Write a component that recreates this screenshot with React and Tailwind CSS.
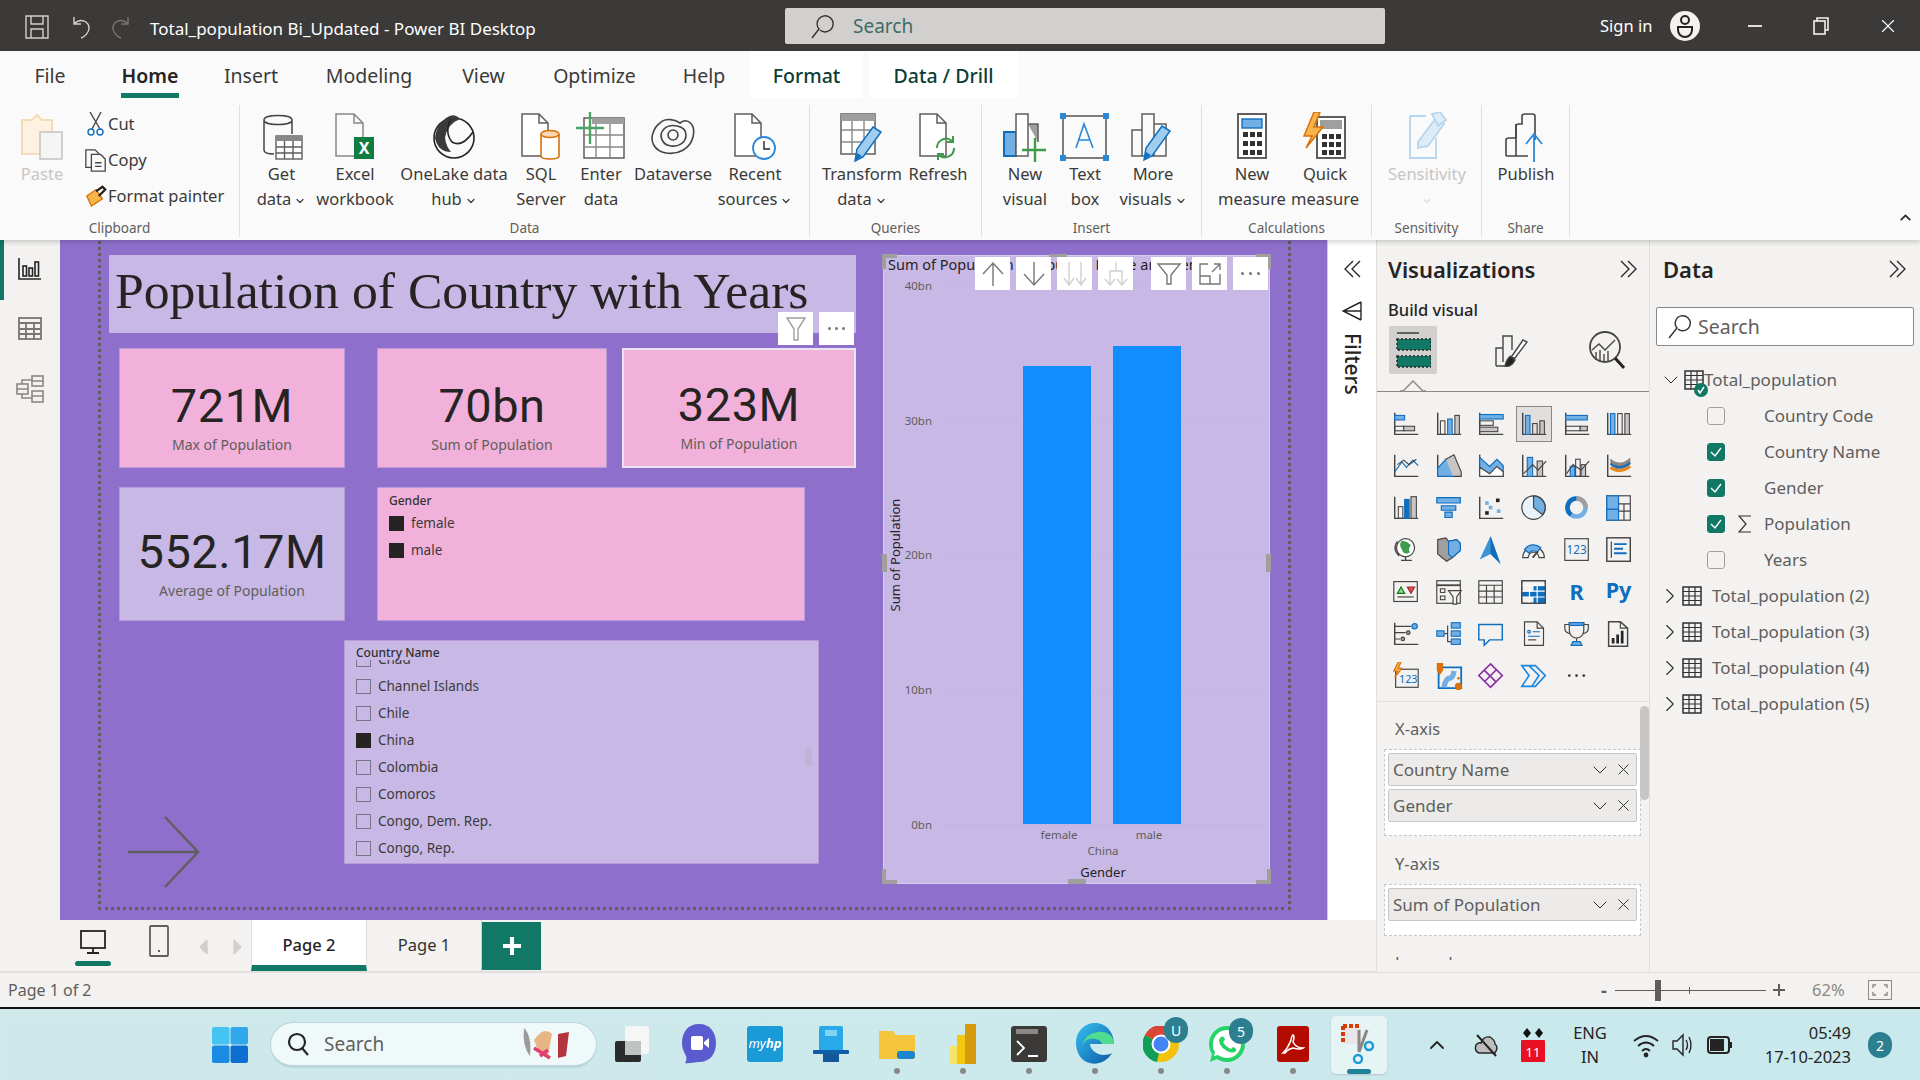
import { ChevronDown, ChevronRight, ChevronUp, X } from 'lucide-react';

const FONT = { fontFamily: '"Noto Sans", "Open Sans", sans-serif' };
const D = '#464544';
const BL = '#106ebe';
const LB = '#71afe5';
const GR = '#c8c6c4';
const TEAL = '#117865';

// line drawing wrapper, page of viewBox units
function Ic({ w = 30, h = 30, vb, sw = 1.4, s = D, children, className = '' }) {
  return (
    <svg width={w} height={h} viewBox={vb || `0 0 ${w} ${h}`} fill="none" stroke={s} strokeWidth={sw} className={className}>
      {children}
    </svg>
  );
}

const Axes = () => <path d="M3 3V27H29" stroke={D} strokeWidth="1.6" />;

const R = ({ x, y, w, h, f = 'none', s = D }) => <rect x={x} y={y} width={w} height={h} fill={f} stroke={s} strokeWidth="1.2" />;

const DoubleChev = ({ left }) => (
  <Ic w={20} h={20} s="#252423" sw={1.3}>
    <path d={left ? 'M18 2 10 10 18 18M11 2 3 10 11 18' : 'M2 2 10 10 2 18M9 2 17 10 9 18'} />
  </Ic>
);

const VIZ = [
  <><Axes /><R x={3} y={6} w={11} h={5} f={LB} s={BL} /><R x={3} y={12} w={8} h={0} /><R x={3} y={18} w={10} h={5} /><R x={13} y={18} w={12} h={5} f={GR} /></>,
  <><Axes /><R x={6} y={12} w={5} h={15} /><R x={14} y={10} w={5} h={17} f={LB} s={BL} /><R x={22} y={6} w={5} h={21} f={GR} /></>,
  <><Axes /><R x={3} y={5} w={26} h={5} f={LB} s={BL} /><R x={3} y={12} w={15} h={5} /><R x={3} y={19} w={20} h={5} f={GR} /></>,
  <><Axes /><R x={6} y={6} w={5} h={21} f={LB} s={BL} /><R x={14} y={15} w={5} h={12} /><R x={22} y={12} w={5} h={15} f={GR} /></>,
  <><Axes /><R x={3} y={6} w={24} h={5} f={LB} s={BL} /><R x={3} y={18} w={16} h={5} /><R x={19} y={18} w={8} h={5} f={GR} /></>,
  <><Axes /><R x={6} y={4} w={5} h={23} f={LB} s={BL} /><R x={14} y={4} w={5} h={23} /><R x={22} y={4} w={5} h={23} f={GR} /></>,
  <><Axes /><path d="M3 22 11 11 16 17 23 9 29 15" stroke={BL} /><path d="M6 14 13 9 19 14 27 8" /></>,
  <><Axes /><path d="M3 27V18L12 8 20 20 21 27Z" fill={LB} stroke={BL} /><path d="M12 8 21 3 29 22V27H20" fill={GR} /></>,
  <><Axes /><path d="M3 6 14 16 22 8 29 15V27H3Z" fill={LB} stroke={BL} /><path d="M3 17 14 24 22 16 29 22V27H3Z" fill="#fff" /></>,
  <><Axes /><R x={8} y={6} w={6} h={21} f={LB} s={BL} /><R x={19} y={10} w={6} h={17} f={GR} /><path d="M4 24 14 14 20 20 29 10" /></>,
  <><Axes /><R x={8} y={16} w={5} h={11} f={LB} s={BL} /><R x={14} y={8} w={5} h={19} /><R x={20} y={14} w={5} h={13} f={GR} /><path d="M4 24 11 14 20 20 29 10" /></>,
  <><Axes /><path d="M6 7Q16 17 28 6V14Q16 25 6 14Z" fill="#8a8886" stroke="none" /><path d="M6 17Q16 25 28 16" stroke="#e88a1e" strokeWidth="3" /><path d="M6 13Q16 21 28 12" stroke={BL} strokeWidth="2" /></>,
  <><Axes /><R x={7} y={14} w={5} h={13} /><R x={14} y={6} w={5} h={21} f={BL} s={BL} /><R x={21} y={3} w={6} h={24} f={GR} /></>,
  <><path d="M2 4H28V10H2Z M7 13H23V18H7Z M11 20H19V26H11Z" fill={LB} stroke={BL} /></>,
  <><Axes /><rect x="21" y="5" width="4" height="4" fill="#252423" stroke="none" /><rect x="9" y="8" width="4" height="4" fill={LB} stroke="none" /><rect x="13" y="13" width="4" height="4" fill={LB} stroke="none" /><rect x="9" y="19" width="4" height="4" fill="#252423" stroke="none" /><rect x="22" y="17" width="4" height="4" fill={LB} stroke="none" /></>,
  <><circle cx="15" cy="15" r="13" fill="#eaf3fa" /><path d="M15 2A13 13 0 0 1 25 23L15 15Z" fill={LB} stroke={D} /></>,
  <><circle cx="15" cy="15" r="10" stroke={LB} strokeWidth="5" /><path d="M15 5A10 10 0 0 0 9 23" stroke={BL} strokeWidth="5" /><path d="M15 5A10 10 0 0 1 25 15" stroke="#a19f9d" strokeWidth="5" /></>,
  <><rect x="2" y="2" width="26" height="27" stroke={D} /><rect x="2" y="2" width="13" height="15" fill={LB} stroke={BL} /><rect x="2" y="17" width="13" height="12" fill={LB} stroke={BL} /><path d="M15 11H28M21 11V29M15 19H28" /></>,
  <><circle cx="15" cy="13" r="10" fill="#fff" /><path d="M11 5Q17 6 21 10 17 15 20 18 13 22 11 15 7 10 11 5Z" fill="#3c9c4a" stroke="none" /><path d="M6 6Q0 14 8 22M10 27H22M15 23V27" strokeWidth="1.6" /></>,
  <><path d="M3 4 12 2 15 6 24 4 28 8V16L19 24 13 28 8 24 3 20Z" fill="#a19f9d" stroke={D} /><path d="M15 6 24 4 28 8V16L19 24 15 20Z" fill={LB} stroke={BL} /></>,
  <><path d="M15 0 26 31 15 20 3 26Z" fill="#3d93d4" stroke="none" /><path d="M15 0 26 31 15 20Z" fill={BL} stroke="none" /></>,
  <><path d="M3 24A12 12 0 0 1 27 24H21A6 6 0 0 0 9 24Z" stroke={D} /><path d="M5 15A12 12 0 0 1 23 13L19 18A6 6 0 0 0 10 19Z" fill={LB} stroke={BL} /><path d="M14 24 20 17" strokeWidth="2" /></>,
  <><rect x="2" y="3" width="26" height="24" /><text x="15" y="20" fontFamily="Noto Sans" fontSize="13" fill={BL} stroke="none" textAnchor="middle">123</text></>,
  <><rect x="2" y="2" width="26" height="26" strokeWidth="1.6" /><path d="M7 6V24" /><path d="M10 9H24M10 14H20M10 19H24" stroke={BL} strokeWidth="2.2" /></>,
  <><rect x="2" y="4" width="26" height="22" /><path d="M6 17 10 10 14 17Z" fill="#92d4a5" stroke="#107c10" /><path d="M17 10H25L21 17Z" fill="#e05252" stroke="#a4262c" /><path d="M6 21H24" /></>,
  <><rect x="2" y="3" width="26" height="25" /><path d="M2 8H28" strokeWidth="2" /><R x={6} y={12} w={5} h={4} /><R x={6} y={20} w={5} h={4} /><path d="M15 14H29L24 21V29H20V21Z" fill="#f3f2f1" /></>,
  <><rect x="2" y="3" width="26" height="25" /><path d="M2 8H28M2 14.5H28M2 21H28M10.5 8V28M19 8V28" /></>,
  <><rect x="2" y="3" width="26" height="25" /><rect x="15" y="9" width="13" height="19" fill={BL} stroke="none" /><rect x="2" y="15" width="26" height="6" fill={BL} stroke="none" /><path d="M2 8H28M2 14.5H28M2 21H28M10.5 8V28M19 8V28" stroke="#fff" /><rect x="2" y="3" width="26" height="25" /></>,
  <text x="15" y="24" fontFamily="Noto Sans" fontWeight="700" fontSize="24" fill={BL} stroke="none" textAnchor="middle">R</text>,
  <text x="15" y="22" fontFamily="Noto Sans" fontWeight="700" fontSize="24" fill={BL} stroke="none" textAnchor="middle">Py</text>,
  <><Axes /><path d="M3 7H21M3 14H15M3 21H9" /><circle cx="25" cy="7" r="3" fill={LB} stroke={BL} /><circle cx="18" cy="14" r="2" fill="#a19f9d" /><circle cx="12" cy="21" r="2" fill="#a19f9d" /></>,
  <><path d="M9 15H14M14 6V24H18" stroke={D} /><R x={2} y={12} w={8} h={6} f={LB} s={BL} /><R x={18} y={3} w={10} h={6} f={LB} s={BL} /><R x={18} y={12} w={10} h={6} f={LB} s={BL} /><R x={18} y={21} w={10} h={6} f={LB} s={BL} /></>,
  <path d="M2 5H28V22H14L8 28V22H2Z" stroke={BL} strokeWidth="1.6" />,
  <><path d="M5 2H19L26 9V28H5Z" /><path d="M19 2V9H26" /><circle cx="10" cy="13" r="1.5" stroke={BL} /><path d="M14 13H22M9 18H22" stroke={BL} /><path d="M9 22H18" /></>,
  <><path d="M7 3H23V12A8 8 0 0 1 7 12Z M7 5H2V9Q2 14 8 15M23 5H28V9Q28 14 22 15M15 20V24" /><path d="M7 3H23V6H7Z" fill={LB} stroke={BL} /><path d="M9 28 11 24H19L21 28Z" fill={LB} stroke={BL} /></>,
  <><path d="M4 2H17L25 9V29H4Z" strokeWidth="1.6" /><path d="M17 2V9H25" /><path d="M9 26V20M14 26V16M19 26V12" stroke="#252423" strokeWidth="3" /></>,
  <><rect x="4" y="8" width="25" height="20" /><text x="18" y="23" fontFamily="Noto Sans" fontSize="12" fill={BL} stroke="none" textAnchor="middle">123</text><path d="M7 0 2 10H6L3 17 11 7H7L10 0Z" fill="#f7b44a" stroke="#d9700a" /></>,
  <><path d="M4 6H29V29H4Z" stroke={BL} strokeWidth="2" /><path d="M10 28Q12 18 16 18T21 10" stroke={LB} strokeWidth="6" /><path d="M2 1H9V9L5 15 2 9Z" fill="#d9700a" stroke="none" /><circle cx="26" cy="27" r="4" fill="#d9700a" stroke="none" /><circle cx="26" cy="18" r="1.5" fill="#d9700a" stroke="none" /></>,
  <path d="M15 2 28 15 15 28 2 15Z M8 9 21 22M22 8 9 21" stroke="#8a2da5" strokeWidth="1.8" />,
  <path d="M2 4H17L28 15 17 27H2L10 15ZM10 4 21 15 13 27" stroke="#1a86e0" strokeWidth="1.8" />,
  <g fill="#3b3a39" stroke="none"><circle cx="7" cy="15" r="1.5" /><circle cx="15" cy="15" r="1.5" /><circle cx="23" cy="15" r="1.5" /></g>,
];

const Caret = () => <ChevronDown size={12} strokeWidth={2.4} className="inline ml-[3px]" />;

function RBtn({ w, icon, l1, l2, caret, dim }) {
  return (
    <div className={`${w} flex flex-col items-center shrink-0 ${dim ? 'text-[#c8c6c4]' : 'text-[#3b3a39]'}`}>
      <div className="h-[50px] flex items-center justify-center">{icon}</div>
      <div className="h-[24px] leading-[24px] whitespace-nowrap">{l1}{caret && !l2 ? <Caret /> : null}</div>
      <div className="h-[25px] leading-[26px] whitespace-nowrap">{l2}{caret && l2 ? <Caret /> : null}</div>
    </div>
  );
}

function Group({ w, label, children, pad = '' }) {
  return (
    <div className={`${w} h-[132px] mt-[7px] flex flex-col border-r border-[#e1dfdd] shrink-0`}>
      <div className={`flex h-[114px] pt-[7px] ${pad}`}>{children}</div>
      <div className="h-[18px] text-center text-[13.5px] text-[#605e5c] leading-[18px]">{label}</div>
    </div>
  );
}

const Doc = () => <path d="M3 2H20L29 11V44H3Z M20 2V11H29" stroke="#605e5c" strokeWidth="1.5" fill="#fff" />;
const Pencil = ({ t = '' }) => (
  <g transform={t}>
    <path d="M0 34 2 22 18 0 26 5 8 30Z" fill="#9fcdf0" stroke={BL} strokeWidth="1.5" />
    <path d="M0 34 2 26 7 29Z" fill={BL} stroke="none" />
  </g>
);

const RIB = {
  paste: (
    <Ic w={46} h={50}>
      <path d="M3 8H13L18 3 23 8H33V42H3Z" fill="#fdf2e2" stroke="#f3d4a7" strokeWidth="1.6" />
      <rect x="21" y="20" width="22" height="27" fill="#f5f5f5" stroke="#c8c6c4" strokeWidth="1.6" />
    </Ic>
  ),
  cut: <Ic w={20} h={26}><path d="M4 1 14 18M15 1 6 18" /><circle cx="5" cy="21" r="3" stroke={BL} /><circle cx="14" cy="21" r="3" stroke={BL} /></Ic>,
  copy: <Ic w={26} h={28}><path d="M2 3H12L16 7V22H2Z" /><path d="M8 8H18L23 13V26H8Z" fill="#fafafa" /><path d="M12 17H19M12 21H19" /></Ic>,
  painter: <Ic w={26} h={26}><path d="M3 13 13 6 20 16 8 24Z" fill="#f7b44a" stroke="#d9700a" /><path d="M13 8 20 3 23 6 16 13" stroke="#252423" strokeWidth="2.5" /></Ic>,
  getdata: (
    <Ic w={44} h={50}>
      <path d="M4 8V38Q4 42 14 42M4 8C4 2 32 2 32 8 32 14 4 14 4 8ZM32 8V22" strokeWidth="1.5" />
      <rect x="16" y="24" width="26" height="23" fill="#fff" stroke="#605e5c" />
      <path d="M16 24H42V29H16Z" fill="#8a8886" stroke="none" />
      <path d="M16 35H42M16 41H42M24.5 29V47M33 29V47" stroke="#605e5c" />
    </Ic>
  ),
  excel: (
    <Ic w={42} h={50}>
      <path d="M2 2H20L29 11V44H2Z M20 2V11H29" stroke="#8a8886" strokeWidth="1.5" />
      <rect x="20" y="25" width="20" height="22" fill="#107c41" stroke="none" />
      <text x="30" y="42" fontFamily="Noto Sans" fontSize="16" fontWeight="700" fill="#fff" stroke="none" textAnchor="middle">X</text>
    </Ic>
  ),
  onelake: (
    <Ic w={44} h={46}>
      <circle cx="22" cy="24" r="20" stroke="#252423" strokeWidth="1.6" />
      <path d="M14 4Q22 -2 28 5 15 10 13 24 14 32 19 38 6 38 3 24 4 12 14 4Z" fill="#3b3a39" stroke="none" />
      <path d="M19 5Q12 18 20 28 30 34 41 18" stroke="#252423" strokeWidth="1.6" />
    </Ic>
  ),
  sql: (
    <Ic w={44} h={50}>
      <Doc />
      <g stroke="#d9700a" strokeWidth="1.6" fill="#fff">
        <path d="M22 22V44Q22 47 31 47T40 44V22" />
        <ellipse cx="31" cy="22" rx="9" ry="3.5" fill="#f8d7b5" />
      </g>
    </Ic>
  ),
  enter: (
    <Ic w={50} h={50}>
      <rect x="8" y="6" width="40" height="40" stroke="#605e5c" strokeWidth="1.5" fill="#fff" />
      <path d="M16 6H48V12H16Z" fill="#a19f9d" stroke="none" />
      <path d="M8 23H48M8 35H48M20 12V46M34 12V46" stroke="#8a8886" />
      <path d="M14 0V32M0 16H28" stroke="#4aa564" strokeWidth="2.4" />
    </Ic>
  ),
  dataverse: (
    <Ic w={46} h={44}>
      <path d="M10 8C16 2 26 5 30 8 38 2 46 10 43 22 40 34 28 40 16 38 4 36 0 26 3 18 5 12 7 10 10 8Z" strokeWidth="1.6" />
      <path d="M14 14C20 8 36 10 36 20 36 28 28 32 21 31 12 30 8 20 14 14Z" strokeWidth="1.6" />
      <circle cx="23" cy="20" r="5" strokeWidth="1.6" />
    </Ic>
  ),
  recent: (
    <Ic w={46} h={50}>
      <Doc />
      <circle cx="32" cy="36" r="11" fill="#fff" stroke="#2b88d8" strokeWidth="1.8" />
      <path d="M32 29V37H38" stroke="#252423" />
    </Ic>
  ),
  transform: (
    <Ic w={46} h={50}>
      <rect x="2" y="2" width="34" height="40" fill="#fff" stroke="#605e5c" strokeWidth="1.5" />
      <path d="M2 2H36V9H2Z" fill="#a19f9d" stroke="none" />
      <path d="M2 18H36M2 30H36M13 9V42M25 9V42" stroke="#8a8886" />
      <Pencil t="translate(16 15)" />
    </Ic>
  ),
  refresh: (
    <Ic w={42} h={50}>
      <Doc />
      <path d="M20 36A9 9 0 0 1 35 29M37 36A9 9 0 0 1 22 43" stroke="#3c9c4a" strokeWidth="2" />
      <path d="M36 24V30H30M21 48V42H27" stroke="#3c9c4a" strokeWidth="2" />
    </Ic>
  ),
  newvisual: (
    <Ic w={46} h={50}>
      <path d="M2 20H14V44H2Z" fill={LB} stroke={BL} strokeWidth="2" />
      <path d="M14 2H26V44H14Z" fill="#fff" stroke="#605e5c" strokeWidth="1.5" />
      <path d="M26 12H36V30" stroke="#605e5c" strokeWidth="1.5" fill="#a19f9d" />
      <path d="M33 26V50M20 38H44" stroke="#3c9c4a" strokeWidth="2.4" />
    </Ic>
  ),
  textbox: (
    <Ic w={50} h={50}>
      <rect x="3" y="4" width="43" height="42" stroke="#605e5c" strokeWidth="1.6" />
      <g fill="#2b88d8" stroke="none"><rect x="0" y="1" width="6" height="6" /><rect x="43" y="1" width="6" height="6" /><rect x="0" y="43" width="6" height="6" /><rect x="43" y="43" width="6" height="6" /></g>
      <path d="M16 36 24 12 33 36M19 28H30" stroke="#2b88d8" strokeWidth="1.6" />
    </Ic>
  ),
  more: (
    <Ic w={46} h={50}>
      <path d="M2 18H12V44H2Z M12 2H24V44H12Z M24 12H36V44H24Z" stroke="#605e5c" strokeWidth="1.5" />
      <Pencil t="translate(14 14)" />
    </Ic>
  ),
  calc: (
    <Ic w={32} h={50}>
      <rect x="2" y="2" width="28" height="44" fill="#fff" stroke="#605e5c" strokeWidth="2" />
      <rect x="6" y="7" width="20" height="9" fill={LB} stroke={BL} />
      <g fill="#323130" stroke="none">
        {[20, 29, 38].map((y) => [7, 14, 21].map((x) => <rect key={`${x}-${y}`} x={x} y={y} width="5" height="5" />))}
      </g>
    </Ic>
  ),
  quick: (
    <Ic w={44} h={50}>
      <rect x="14" y="5" width="28" height="41" fill="#fff" stroke="#605e5c" strokeWidth="2" />
      <rect x="17" y="8" width="22" height="9" fill="#a19f9d" stroke="none" />
      <g fill="#323130" stroke="none">
        {[22, 30, 38].map((y) => [19, 26, 33].map((x) => <rect key={`${x}-${y}`} x={x} y={y} width="5" height="5" />))}
      </g>
      <path d="M11 0 1 24H9L3 36 20 15H11L17 0Z" fill="#f7b44a" stroke="#d9700a" strokeWidth="1.5" />
    </Ic>
  ),
  sensitivity: (
    <Ic w={42} h={50} s="#b5d6ee" sw={1.8}>
      <path d="M4 4H20M4 4V46H30V26" />
      <path d="M12 30 30 6 38 12 22 34 12 36Z" fill="#deecf9" />
      <path d="M26 2 34 0 40 8 32 14Z" fill="#deecf9" />
    </Ic>
  ),
  publish: (
    <Ic w={44} h={50}>
      <path d="M12 44V14Q12 12 15 12H18V4Q18 2 21 2H28Q31 2 31 4V28" strokeWidth="1.6" />
      <path d="M2 44V28Q2 26 5 26H12M2 44H24M12 12V26" strokeWidth="1.6" />
      <path d="M30 50V24M22 32 30 22 38 32" stroke="#2b88d8" strokeWidth="1.8" />
    </Ic>
  ),
};

function TitleBar() {
  return (
    <div className="h-[51px] bg-[#3b3a39] flex items-center shrink-0 text-white">
      <div className="w-[150px] flex items-center pl-[25px] pt-[3px] shrink-0">
        <Ic w={24} h={24} s="#d2d0ce"><path d="M1 1H23V23H1ZM6 1V9H18V1M6 23V14H18V23" /></Ic>
        <Ic w={22} h={24} s="#d2d0ce" className="ml-[20px]"><path d="M5 2V9H12M5 9C12 2 20 7 20 13 20 17 16 22 12 23" /></Ic>
        <Ic w={22} h={24} s="#797775" className="ml-[20px]"><path d="M17 2V9H10M17 9C10 2 2 7 2 13 2 17 6 22 10 23" /></Ic>
      </div>
      <div className="w-[635px] text-[17px] pt-[6px] whitespace-nowrap shrink-0">Total_population Bi_Updated - Power BI Desktop</div>
      <div className="w-[600px] h-[36px] bg-[#d2d0ce] rounded-[2px] flex items-center pl-[25px] shrink-0">
        <Ic w={26} h={26} s="#323130"><path d="M10 17A8 8 0 1 0 9 16L2 25" /></Ic>
        <span className="ml-[17px] text-[19px] pt-[2px] text-[#3d6b66]">Search</span>
      </div>
      <div className="flex-1 flex items-center pl-[215px]">
        <span className="text-[16.5px] pt-[2px] w-[70px] whitespace-nowrap">Sign in</span>
        <div className="w-[30px] h-[30px] rounded-full bg-[#f3f2f1] flex items-center justify-center">
          <Ic w={20} h={24} s="#252423" sw={2}><circle cx="10" cy="6" r="4" /><path d="M3 13H17V16A7 7 0 0 1 3 16Z" /></Ic>
        </div>
        <div className="w-[14px] h-[2px] bg-[#e1dfdd] ml-[48px]" />
        <Ic w={16} h={18} s="#f3f2f1" sw={1.6} className="ml-[51px]"><rect x="1" y="4" width="11" height="13" /><path d="M4 4V1H15V13H12" /></Ic>
        <X size={22} strokeWidth={1.2} className="ml-[48px]" />
      </div>
    </div>
  );
}

function RibbonTab({ w, label, active, boxed }) {
  return (
    <div className={`${w} h-[47px] pt-[2px] relative flex items-center justify-center shrink-0 text-[19.5px] ${active ? 'font-semibold text-[#252423]' : boxed ? 'font-medium text-[#0b3d36]' : 'text-[#3b3a39]'} ${boxed ? 'bg-white' : ''}`}>
      {label}
      {active && <div className="absolute bottom-0 left-[21px] w-[58px] h-[5px] bg-[#117865]" />}
    </div>
  );
}

function Ribbon() {
  return (
    <div className="h-[189px] bg-[#fafafa] shrink-0 relative z-10 shadow-[0_2px_5px_rgba(0,0,0,0.18)] text-[16.5px]">
      <div className="flex h-[47px]">
        <RibbonTab w="w-[100px]" label="File" />
        <RibbonTab w="w-[100px]" label="Home" active />
        <RibbonTab w="w-[102px]" label="Insert" />
        <RibbonTab w="w-[134px]" label="Modeling" />
        <RibbonTab w="w-[95px]" label="View" />
        <RibbonTab w="w-[127px]" label="Optimize" />
        <RibbonTab w="w-[92px]" label="Help" />
        <RibbonTab w="w-[113px]" label="Format" boxed />
        <div className="w-[6px]" />
        <RibbonTab w="w-[149px]" label="Data / Drill" boxed />
      </div>
      <div className="flex h-[142px] items-start">
        <Group w="w-[240px]" label="Clipboard">
          <RBtn w="w-[84px]" icon={RIB.paste} l1="Paste" dim />
          <div className="flex flex-col text-[#3b3a39] -mt-[6px]">
            {[['Cut', RIB.cut], ['Copy', RIB.copy], ['Format painter', RIB.painter]].map(([t, ic]) => (
              <div key={t} className="h-[36px] flex items-center whitespace-nowrap">
                <div className="w-[24px] flex justify-center">{ic}</div>
                <span>{t}</span>
              </div>
            ))}
          </div>
        </Group>
        <Group w="w-[570px]" label="Data" pad="pl-[4px]">
          <RBtn w="w-[75px]" icon={RIB.getdata} l1="Get" l2="data" caret />
          <RBtn w="w-[72px]" icon={RIB.excel} l1="Excel" l2="workbook" />
          <RBtn w="w-[126px]" icon={RIB.onelake} l1="OneLake data" l2="hub" caret />
          <RBtn w="w-[48px]" icon={RIB.sql} l1="SQL" l2="Server" />
          <RBtn w="w-[72px]" icon={RIB.enter} l1="Enter" l2="data" />
          <RBtn w="w-[72px]" icon={RIB.dataverse} l1="Dataverse" />
          <RBtn w="w-[92px]" icon={RIB.recent} l1="Recent" l2="sources" caret />
        </Group>
        <Group w="w-[172px]" label="Queries" pad="pl-[10px]">
          <RBtn w="w-[84px]" icon={RIB.transform} l1="Transform" l2="data" caret />
          <RBtn w="w-[68px]" icon={RIB.refresh} l1="Refresh" />
        </Group>
        <Group w="w-[220px]" label="Insert" pad="pl-[12px]">
          <RBtn w="w-[62px]" icon={RIB.newvisual} l1="New" l2="visual" />
          <RBtn w="w-[58px]" icon={RIB.textbox} l1="Text" l2="box" />
          <RBtn w="w-[78px]" icon={RIB.more} l1="More" l2="visuals" caret />
        </Group>
        <Group w="w-[170px]" label="Calculations" pad="pl-[10px]">
          <RBtn w="w-[80px]" icon={RIB.calc} l1="New" l2="measure" />
          <RBtn w="w-[66px]" icon={RIB.quick} l1="Quick" l2="measure" />
        </Group>
        <Group w="w-[110px]" label="Sensitivity">
          <RBtn w="w-[110px]" icon={RIB.sensitivity} l1="Sensitivity" l2={<ChevronDown size={12} className="inline" />} dim />
        </Group>
        <Group w="w-[88px]" label="Share">
          <RBtn w="w-[88px]" icon={RIB.publish} l1="Publish" />
        </Group>
        <div className="flex-1 flex justify-end pr-[6px] pt-[111px]"><ChevronUp size={17} strokeWidth={2.6} className="text-[#323130]" /></div>
      </div>
    </div>
  );
}

function Rail() {
  return (
    <div className="w-[60px] bg-[#f3f2f1] shrink-0 relative flex flex-col items-center pt-[17px] gap-[33px]">
      <div className="absolute left-0 top-0 w-[4px] h-[60px] bg-[#117865]" />
      <Ic w={24} h={24} s="#252423" sw={1.6}><path d="M1 1V22H23" /><rect x="5" y="9" width="3.5" height="10" /><rect x="11" y="11" width="3.5" height="8" /><rect x="17" y="5" width="3.5" height="14" /></Ic>
      <Ic w={26} h={24} s="#797775" sw={1.8} className="mt-[3px]"><rect x="2" y="1" width="22" height="21" /><path d="M2 6H24M2 12H24M2 17H24M9 6V22M17 6V22" /></Ic>
      <Ic w={30} h={30} s="#8a8886" sw={1.6}><rect x="2" y="10" width="11" height="10" /><rect x="17" y="2" width="11" height="10" /><rect x="17" y="17" width="11" height="11" /><path d="M2 15H13M17 7H28M17 22H28M7 10V6H17M7 20V24H17" /></Ic>
    </div>
  );
}

function Card({ w, value, label, pb = 'pb-[12px]', tone = 'bg-[#f2b1da]', extra = 'border border-[#b99ad8]' }) {
  return (
    <div className={`${w} h-full ${tone} ${extra} flex flex-col items-center shrink-0`}>
      <div className={`flex-1 flex flex-col items-center justify-end ${pb}`}>
        <div className="text-[47px] leading-[52px] text-[#252423] tracking-[0.5px] whitespace-nowrap" style={{ fontFamily: 'Roboto, sans-serif' }}>{value}</div>
        <div className="text-[14px] leading-[20px] text-[#605e5c] mt-[3px] whitespace-nowrap">{label}</div>
      </div>
    </div>
  );
}

function SlicerRow({ label, on, h = 'h-[27px]' }) {
  return (
    <div className={`${h} flex items-center shrink-0`}>
      <span className={`w-[15px] h-[15px] border ${on ? 'bg-[#252423] border-[#252423]' : 'border-[#7a7488]'}`} />
      <span className="ml-[7px] text-[13.5px] text-[#3b3a39] whitespace-nowrap">{label}</span>
    </div>
  );
}

const TICKS = [['40bn', 286], ['30bn', 421], ['20bn', 555], ['10bn', 690], ['0bn', 825]];

const Handle = ({ className }) => <div className={`absolute bg-[#a19f9d] ${className}`} />;

function ToolBtn({ children, className = '' }) {
  return <div className={`w-[35px] h-[33px] bg-white flex items-center justify-center shrink-0 ${className}`}>{children}</div>;
}

function Chart() {
  return (
    <div className="w-[387px] h-[629px] ml-[27px] bg-[#c8b8e6] border border-[#d6cdea] relative shrink-0">
      <svg width="387" height="629" viewBox="883 255 387 629" className="absolute -left-px -top-px">
        <text x="888" y="270" fontSize="14.5" fill="#252423" fontFamily="Noto Sans">Sum of Population by Country Name and Gender</text>
        {TICKS.map(([t, y]) => (
          <g key={t}>
            <text x="932" y={y + 4} textAnchor="end" fontSize="11.5" fill="#605e5c" fontFamily="Noto Sans">{t}</text>
            <path d={`M940 ${y}H1265`} stroke="#bcaedc" strokeDasharray="2 2" />
          </g>
        ))}
        <rect x="1023" y="366" width="68" height="458" fill="#118dff" />
        <rect x="1113" y="346" width="68" height="478" fill="#118dff" />
        <text transform="translate(900 555) rotate(-90)" textAnchor="middle" fontSize="13" fill="#252423" fontFamily="Noto Sans">Sum of Population</text>
        <text x="1059" y="839" textAnchor="middle" fontSize="11.5" fill="#605e5c" fontFamily="Noto Sans">female</text>
        <text x="1149" y="839" textAnchor="middle" fontSize="11.5" fill="#605e5c" fontFamily="Noto Sans">male</text>
        <text x="1103" y="855" textAnchor="middle" fontSize="11.5" fill="#605e5c" fontFamily="Noto Sans">China</text>
        <text x="1103" y="877" textAnchor="middle" fontSize="13" fill="#252423" fontFamily="Noto Sans">Gender</text>
      </svg>
      <div className="absolute left-[91px] top-[1px] flex gap-[6px]">
        <ToolBtn><Ic w={24} h={26} s="#797775"><path d="M12 25V2M2 13 12 2 22 13" /></Ic></ToolBtn>
        <ToolBtn><Ic w={24} h={26} s="#797775"><path d="M12 1V24M2 13 12 24 22 13" /></Ic></ToolBtn>
        <ToolBtn><Ic w={24} h={26} s="#d2d0ce"><path d="M6 1V24M1 17 6 24 11 17M18 1V24M13 17 18 24 23 17" /></Ic></ToolBtn>
        <ToolBtn><Ic w={24} h={26} s="#d2d0ce"><path d="M12 1V10M6 24V10H18V24M1 18 6 24 11 18M13 18 18 24 23 18" /></Ic></ToolBtn>
        <ToolBtn className="ml-[12px]"><Ic w={26} h={24} s="#797775"><path d="M2 2H24L15 13V22H11V13Z" /></Ic></ToolBtn>
        <ToolBtn><Ic w={24} h={24} s="#797775"><path d="M10 2H2V22H22V12M2 14H12V22M14 10 22 2M16 2H22V8" /></Ic></ToolBtn>
        <ToolBtn><span className="flex gap-[5px]">{[0, 1, 2].map((i) => <span key={i} className="w-[3px] h-[3px] rounded-full bg-[#797775]" />)}</span></ToolBtn>
      </div>
      <Handle className="-left-[2px] -top-[2px] w-[15px] h-[4px]" />
      <Handle className="-left-[2px] -top-[2px] w-[4px] h-[15px]" />
      <Handle className="left-[165px] -top-[2px] w-[18px] h-[3px]" />
      <Handle className="-right-[2px] -top-[2px] w-[15px] h-[3px]" />
      <Handle className="-right-[2px] -top-[2px] w-[3px] h-[15px]" />
      <Handle className="-left-[2px] top-[298px] w-[5px] h-[18px]" />
      <Handle className="-right-[2px] top-[298px] w-[5px] h-[18px]" />
      <Handle className="-left-[2px] -bottom-[1px] w-[15px] h-[4px]" />
      <Handle className="-left-[2px] -bottom-[1px] w-[4px] h-[15px]" />
      <Handle className="left-[184px] -bottom-[1px] w-[18px] h-[5px]" />
      <Handle className="-right-[2px] -bottom-[1px] w-[15px] h-[4px]" />
      <Handle className="-right-[2px] -bottom-[1px] w-[4px] h-[15px]" />
    </div>
  );
}

function Canvas() {
  return (
    <div className="w-[1267px] bg-[#8e70cc] shrink-0 relative flex pl-[49px] pt-[15px] overflow-hidden">
      <div className="absolute left-[38px] -top-[10px] w-[1193px] h-[680px] border-[3px] border-dotted border-[#605e5c] pointer-events-none" />
      <div className="w-[747px] shrink-0 relative">
        <div className="h-[78px] bg-[#c8b8e6] pl-[6px] pb-[6px] flex items-center">
          <span className="text-[51.7px] leading-[60px] text-[#252423] whitespace-nowrap" style={{ fontFamily: '"Liberation Serif", serif' }}>Population of Country with Years</span>
        </div>
        <div className="absolute right-[2px] top-[57px] flex gap-[6px]">
          <ToolBtn><Ic w={22} h={26} s="#a19f9d"><path d="M2 2H20L13 13V24H9V13Z" /></Ic></ToolBtn>
          <ToolBtn><span className="flex gap-[4px]">{[0, 1, 2].map((i) => <span key={i} className="w-[3px] h-[3px] rounded-full bg-[#797775]" />)}</span></ToolBtn>
        </div>
        <div className="flex h-[120px] mt-[15px] ml-[10px]">
          <Card w="w-[226px]" value="721M" label="Max of Population" />
          <div className="w-[32px]" />
          <Card w="w-[230px]" value="70bn" label="Sum of Population" />
          <div className="w-[15px]" />
          <Card w="w-[234px]" value="323M" label="Min of Population" extra="border-[2px] border-[#e8e4f2]" />
        </div>
        <div className="flex h-[134px] mt-[19px] ml-[10px]">
          <Card w="w-[226px]" value="552.17M" label="Average of Population" tone="bg-[#c8b8e6]" pb="pb-[19px]" />
          <div className="w-[32px]" />
          <div className="w-[428px] bg-[#f2b1da] border border-[#b99ad8] pl-[11px] pt-[4px]">
            <div className="text-[12px] leading-[17px] font-medium text-[#323130]">Gender</div>
            <SlicerRow label="female" on h="h-[27px] mt-[1px]" />
            <SlicerRow label="male" on />
          </div>
        </div>
        <div className="flex h-[224px] mt-[19px] ml-[19px]">
          <div className="w-[216px] shrink-0 pt-[176px]">
            <Ic w={72} h={72} s="#605e5c" sw={2.4}><path d="M0 36H70M37 1 70 36 37 71" /></Ic>
          </div>
          <div className="w-[475px] bg-[#c8b8e6] border border-[#b99ad8] pl-[11px] relative shrink-0">
            <div className="h-[19px] text-[12px] leading-[24px] font-medium text-[#323130] relative z-10">Country Name</div>
            <div className="h-[204px] overflow-hidden">
              <div className="-mt-[14px]">
                {['Chad', 'Channel Islands', 'Chile', 'China', 'Colombia', 'Comoros', 'Congo, Dem. Rep.', 'Congo, Rep.'].map((c) => (
                  <SlicerRow key={c} label={c} on={c === 'China'} />
                ))}
              </div>
            </div>
            <div className="absolute right-[6px] top-[106px] w-[7px] h-[19px] bg-[#bdb5d6]" />
          </div>
        </div>
      </div>
      <Chart />
    </div>
  );
}

function FiltersPane() {
  return (
    <div className="w-[49px] bg-white shrink-0 flex flex-col items-center pt-[19px] border-l border-[#d2d0ce]">
      <DoubleChev left />
      <Ic w={20} h={20} s="#252423" className="mt-[22px]"><path d="M1 10H19M19 1V19M19 1 1 10 19 19" /></Ic>
      <div className="mt-[12px] text-[21px] font-medium text-[#252423] [writing-mode:vertical-rl]">Filters</div>
    </div>
  );
}

function Well({ label, items, h, mt }) {
  return (
    <div className={mt}>
      <div className="pl-[18px] h-[24px] text-[16.5px] leading-[24px] text-[#605e5c]">{label}</div>
      <div className={`${h} mt-[8px] ml-[7px] w-[257px] bg-white border border-dashed border-[#c8c6c4] px-[3px] pt-[3px] flex flex-col gap-[3px]`}>
        {items.map((t) => (
          <div key={t} className="h-[33px] bg-[#edebe9] border border-[#c8c6c4] rounded-[2px] flex items-center pl-[4px] text-[17px] text-[#605e5c] shrink-0">
            <span className="flex-1 whitespace-nowrap">{t}</span>
            <ChevronDown size={24} strokeWidth={1} className="text-[#323130]" />
            <X size={19} strokeWidth={1.2} className="ml-[2px] mr-[3px] text-[#323130]" />
          </div>
        ))}
      </div>
    </div>
  );
}

function VizPane() {
  return (
    <div className="w-[274px] bg-[#f3f2f1] shrink-0 border-l border-[#e1dfdd] border-r relative overflow-hidden">
      <div className="h-[58px] flex items-center pl-[11px] pr-[10px] text-[22px] font-semibold text-[#252423]">
        <span className="flex-1">Visualizations</span>
        <DoubleChev />
      </div>
      <div className="pl-[11px] h-[28px] text-[16.5px] font-medium text-[#252423] leading-[24px]">Build visual</div>
      <div className="flex items-center pl-[12px] h-[48px]">
        <div className="w-[48px] h-[48px] bg-[#d2d0ce] rounded-[2px] flex items-center justify-center">
          <Ic w={36} h={38}>
            <path d="M2 2H24" stroke="#323130" />
            <rect x="2" y="8" width="34" height="11" fill={TEAL} stroke="#252423" strokeDasharray="2 2" />
            <rect x="2" y="25" width="34" height="11" fill={TEAL} stroke="#252423" strokeDasharray="2 2" />
          </Ic>
        </div>
        <Ic w={36} h={40} className="ml-[56px]">
          <path d="M3 36V18H10V6H19V20M10 18V32M3 36H12" />
          <path d="M14 34Q16 26 22 28L34 12 30 10 19 26" fill="#fff" />
          <path d="M12 36Q18 38 22 30L18 26Q14 28 12 36Z" fill="#252423" />
        </Ic>
        <Ic w={38} h={40} className="ml-[58px]">
          <circle cx="18" cy="17" r="15" strokeWidth="1.8" />
          <path d="M28 28 37 38" strokeWidth="3" stroke="#252423" />
          <path d="M5 20 12 14 18 20 28 10" />
          <path d="M9 22V30M13 20V31M17 24V32M21 21V31" />
        </Ic>
      </div>
      <div className="relative h-[18px] border-b-[1.5px] border-[#8a8886]">
        <Ic w={26} h={12} s="#8a8886" className="absolute left-[23px] bottom-[-1px]"><path d="M0 11H3L13 1 23 11H26" fill="#f3f2f1" /></Ic>
      </div>
      <div className="grid grid-cols-[repeat(6,42.6px)] auto-rows-[42px] pl-[8px] pt-[11px] h-[310px] border-b border-[#e1dfdd]">
        {VIZ.map((ic, i) => (
          <div key={i} className="flex items-center justify-center">
            <div className={`w-[36px] h-[36px] flex items-center justify-center ${i === 3 ? 'bg-[#e1dfdd] border border-[#8a8886]' : ''}`}>
              <Ic w={28} h={28} vb="0 0 31 31" sw={1.3}>{ic}</Ic>
            </div>
          </div>
        ))}
      </div>
      <div className="relative">
        <div className="absolute right-0 top-[4px] w-[9px] h-[94px] bg-[#c8c6c4] rounded-full" />
        <Well mt="pt-[15px]" label="X-axis" h="h-[87px]" items={['Country Name', 'Gender']} />
        <Well mt="pt-[16px]" label="Y-axis" h="h-[52px]" items={['Sum of Population']} />
        {/* the next well's label is cut by the pane scroll in the original */}
        <div className="mt-[19px] h-[5px] overflow-hidden pl-[18px] text-[16.5px] text-[#605e5c]">
          <div className="-mt-[4px] leading-[24px]">Legend</div>
        </div>
      </div>
    </div>
  );
}

const TableIc = () => (
  <Ic w={20} h={20} s="#323130" sw={1.2}><rect x="1" y="1" width="18" height="18" strokeWidth="1.5" /><path d="M1 5.5H19M1 10H19M1 14.5H19M7 1V19M13 1V19" /></Ic>
);

function Check({ on }) {
  return (
    <span className={`w-[18px] h-[18px] rounded-[3px] border flex items-center justify-center shrink-0 ${on ? 'bg-[#117865] border-[#117865]' : 'bg-[#f3f2f1] border-[#a19f9d]'}`}>
      {on && <Ic w={12} h={12} s="#fff" sw={1.4}><path d="M1 6 5 10 11 2" /></Ic>}
    </span>
  );
}

function DataPane() {
  const fields = [['Country Code'], ['Country Name', true], ['Gender', true], ['Population', true, true], ['Years']];
  return (
    <div className="flex-1 bg-[#f3f2f1] overflow-hidden">
      <div className="h-[58px] flex items-center pl-[13px] pr-[12px] text-[22px] font-semibold text-[#252423]">
        <span className="flex-1">Data</span>
        <DoubleChev />
      </div>
      <div className="mx-[6px] h-[39px] w-[258px] mt-[9px] bg-white border border-[#8a8886] rounded-[2px] flex items-center pl-[11px] text-[19.5px] text-[#605e5c]">
        <Ic w={24} h={26} s="#323130"><path d="M10 15A7.5 7.5 0 1 0 9 14L1 24" /></Ic>
        <span className="ml-[6px]">Search</span>
      </div>
      <div className="mt-[16px] text-[17px] text-[#605e5c]">
        <div className="h-[36px] flex items-center pl-[9px]">
          <ChevronDown size={24} strokeWidth={1} className="text-[#323130]" />
          <div className="ml-[1px] relative w-[20px]">
            <TableIc />
            <span className="absolute -right-[4px] -bottom-[7px] w-[14px] h-[14px] rounded-full bg-[#117865] flex items-center justify-center"><Ic w={8} h={8} s="#fff" sw={1.5}><path d="M1 4 3 7 7 1" /></Ic></span>
          </div>
          <span className="whitespace-nowrap">Total_population</span>
        </div>
        {fields.map(([t, on, sum]) => (
          <div key={t} className="h-[36px] flex items-center pl-[57px]">
            <Check on={on} />
            <span className="w-[39px] flex justify-center text-[#323130]">
              {sum && <Ic w={14} h={20} s="#323130" sw={1.2}><path d="M13 2H1L8 10 1 18H13" /></Ic>}
            </span>
            <span className="whitespace-nowrap">{t}</span>
          </div>
        ))}
        {[2, 3, 4, 5].map((n) => (
          <div key={n} className="h-[36px] flex items-center pl-[7px]">
            <ChevronRight size={26} strokeWidth={1} className="text-[#323130]" />
            <div className="-ml-[1px] w-[30px]"><TableIc /></div>
            <span className="whitespace-nowrap">Total_population ({n})</span>
          </div>
        ))}
      </div>
    </div>
  );
}

function TabBar() {
  return (
    <div className="h-[52px] bg-[#f3f2f1] flex shrink-0 w-[1376px] border-b border-[#e1dfdd] absolute left-0 bottom-0">
      <div className="w-[251px] flex items-start shrink-0">
        <div className="w-[36px] ml-[75px] flex flex-col items-center mt-[10px]">
          <Ic w={28} h={24} s="#252423" sw={1.8}><rect x="2" y="1" width="24" height="17" /><path d="M14 18V22M8 23H20" /></Ic>
          <div className="w-[36px] h-[5px] rounded-full bg-[#117865] mt-[7px]" />
        </div>
        <Ic w={20} h={32} s="#605e5c" sw={1.8} className="ml-[38px] mt-[5px]"><rect x="1" y="1" width="18" height="30" rx="1" /><path d="M9 26H11" /></Ic>
        <Ic w={8} h={14} className="ml-[31px] mt-[20px]" s="#d2d0ce"><path d="M7 0V14L0 7Z" fill="#d2d0ce" /></Ic>
        <Ic w={8} h={14} className="ml-[25px] mt-[20px]" s="#d2d0ce"><path d="M1 0V14L8 7Z" fill="#d2d0ce" /></Ic>
      </div>
      <div className="w-[116px] bg-white border-x border-[#e1dfdd] border-b-[6px] border-b-[#117865] pt-[6px] flex items-center justify-center text-[16.5px] font-medium text-[#252423]">Page 2</div>
      <div className="w-[115px] border-r border-[#d2d0ce] flex items-center justify-center text-[16.5px] text-[#323130]">Page 1</div>
      <div className="w-[59px] h-[48px] mt-[2px] bg-[#117865] flex items-center justify-center">
        <Ic w={18} h={18} s="#fff" sw={4}><path d="M9 0V18M0 9H18" /></Ic>
      </div>
    </div>
  );
}

function StatusBar() {
  return (
    <div className="h-[35px] bg-[#f3f2f1] flex items-center shrink-0 border-t border-[#e1dfdd] pl-[8px] text-[16px] text-[#605e5c]">
      <span className="w-[1593px]">Page 1 of 2</span>
      <span className="text-[18px] font-bold w-[14px]">-</span>
      <div className="w-[151px] h-[1px] bg-[#605e5c] relative">
        <div className="absolute left-[40px] -top-[10px] w-[6px] h-[21px] bg-[#605e5c]" />
        <div className="absolute left-[74px] -top-[3px] w-[1px] h-[7px] bg-[#605e5c]" />
      </div>
      <Ic w={12} h={12} s="#605e5c" sw={2} className="ml-[7px]"><path d="M6 0V12M0 6H12" /></Ic>
      <span className="ml-[27px] text-[16.5px] text-[#8a8886] w-[41px]">62%</span>
      <div className="ml-[15px] w-[24px] h-[20px] border-[1.5px] border-[#8a8886] flex items-center justify-center">
        <Ic w={16} h={12} s="#8a8886"><path d="M4 1H1V4M12 1H15V4M4 11H1V8M12 11H15V8" /></Ic>
      </div>
    </div>
  );
}

const Badge = ({ t, className }) => (
  <span className={`absolute w-[24px] h-[26px] rounded-full bg-[#2b7f8f] text-white text-[14px] flex items-center justify-center ${className}`}>{t}</span>
);

function TaskIcon({ children, dot, active }) {
  return (
    <div className="w-[66px] h-[72px] relative flex items-center justify-center shrink-0">
      {active && <div className="absolute left-[5px] top-[7px] w-[56px] h-[58px] bg-[#e6f4f6] rounded-[5px] shadow-[0_1px_2px_rgba(0,0,0,0.15)]" />}
      <div className="relative flex items-center justify-center -mt-[2px]">{children}</div>
      {dot && <div className="absolute bottom-[7px] left-[30px] w-[6px] h-[6px] rounded-full bg-[#8a8886]" />}
      {active && <div className="absolute bottom-[7px] left-[21px] w-[24px] h-[5px] rounded-full bg-[#1f8299]" />}
    </div>
  );
}

function Taskbar() {
  return (
    <div className="flex-1 bg-gradient-to-r from-[#cfe9ea] to-[#c9e9ed] border-t-[2px] border-[#111] flex items-center">
      <div className="w-[212px] shrink-0" />
      <svg width="36" height="36" viewBox="0 0 36 36" className="shrink-0">
        <rect width="17.5" height="17.5" rx="2" fill="#45c4f3" />
        <rect x="18.5" width="17.5" height="17.5" rx="2" fill="#2fa8ec" />
        <rect y="18.5" width="17.5" height="17.5" rx="2" fill="#1a8ae3" />
        <rect x="18.5" y="18.5" width="17.5" height="17.5" rx="2" fill="#0f6fd0" />
      </svg>
      <div className="ml-[22px] w-[327px] h-[46px] rounded-full bg-[#f0f9fa] border border-[#b9d6d9] border-b-[3px] flex items-center pl-[16px] shrink-0">
        <Ic w={24} h={24} s="#252423" sw={2.2}><circle cx="10" cy="10" r="8" /><path d="M15 16 21 23" /></Ic>
        <span className="ml-[13px] text-[19px] text-[#605e5c] w-[198px]">Search</span>
        <svg width="48" height="36" viewBox="0 0 48 36">
          <path d="M2 2Q10 10 8 30 0 20 2 2Z" fill="#9a9a98" />
          <path d="M12 14Q22 0 30 8L26 30 16 24Z" fill="#e8b684" />
          <path d="M12 22 28 32M18 30 26 24" stroke="#e0406f" strokeWidth="3.5" />
          <path d="M36 8 47 6 44 30 36 32Z" fill="#b5353f" />
        </svg>
      </div>
      <div className="w-[3px] shrink-0" />
      <TaskIcon>
        <svg width="36" height="36"><rect x="10" width="24" height="28" rx="2" fill="#f5f7f7" /><rect x="0" y="15" width="26" height="21" rx="2" fill="#2b2b2b" /><rect x="10" y="15" width="16" height="14" fill="#bfc3c3" /></svg>
      </TaskIcon>
      <TaskIcon>
        <svg width="34" height="40" viewBox="0 0 34 40"><path d="M17 0C28 0 34 8 34 19 34 30 28 38 17 38 12 38 6 40 3 39 5 36 5 33 3 30 1 26 0 23 0 19 0 8 6 0 17 0Z" fill="#5b5bd0" /><rect x="9" y="12" width="12" height="14" rx="2" fill="#fff" /><path d="M22 18 27 14V24L22 20Z" fill="#fff" /></svg>
      </TaskIcon>
      <TaskIcon>
        <div className="w-[36px] h-[36px] rounded-[3px] bg-[#1a9ad6] flex items-center justify-center text-white text-[13px] italic">my<b>hp</b></div>
      </TaskIcon>
      <TaskIcon>
        <svg width="36" height="36"><rect x="6" y="0" width="24" height="26" rx="2" fill="#29a8ea" /><rect x="12" y="4" width="12" height="6" fill="#7fd4f7" /><rect x="0" y="24" width="36" height="4" rx="1" fill="#0f5ea8" /><rect x="10" y="28" width="16" height="8" fill="#14589c" /></svg>
      </TaskIcon>
      <TaskIcon dot>
        <svg width="36" height="34"><path d="M0 4H14L17 8H36V32H0Z" fill="#f5c63c" /><rect x="18" y="24" width="18" height="8" rx="3" fill="#1a86d0" /></svg>
      </TaskIcon>
      <TaskIcon dot>
        <svg width="26" height="40"><rect x="0" y="22" width="10" height="18" fill="#f6e36c" /><rect x="7" y="11" width="10" height="29" fill="#f2c811" /><rect x="15" y="0" width="11" height="40" rx="1" fill="#d69b0b" /></svg>
      </TaskIcon>
      <TaskIcon dot>
        <div className="w-[36px] h-[36px] rounded-[3px] bg-[#3b3a39] pt-[1px] relative">
          <div className="h-[5px] bg-[#8a8886] w-[22px] ml-[5px] mt-[2px]" />
          <Ic w={24} h={18} s="#fff" sw={1.8} className="ml-[5px] mt-[6px]"><path d="M1 1 8 8 1 15M12 16H22" /></Ic>
        </div>
      </TaskIcon>
      <TaskIcon dot>
        <svg width="38" height="42" viewBox="0 0 38 42">
          <defs><linearGradient id="edge" x1="0" y1="0" x2="1" y2="1"><stop offset="0" stopColor="#35c1f1" /><stop offset="1" stopColor="#0c59a4" /></linearGradient></defs>
          <path d="M19 0C31 0 38 10 38 21H14C14 27 24 36 36 30 30 40 20 42 14 40 4 38 0 28 0 20 0 8 9 0 19 0Z" fill="url(#edge)" />
          <path d="M38 21C38 12 30 8 22 9 12 10 6 17 6 26 6 17 14 14 20 16 24 17 26 20 26 21Z" fill="#4fdc8f" />
        </svg>
      </TaskIcon>
      <TaskIcon dot>
        <svg width="36" height="36" viewBox="0 0 36 36">
          <circle cx="18" cy="18" r="18" fill="#f4c20d" />
          <path d="M18 18 2 9A18 18 0 0 1 34 9Z" fill="#db4437" />
          <path d="M18 18 2 9A18 18 0 0 0 14 36Z" fill="#0f9d58" />
          <circle cx="18" cy="18" r="8.5" fill="#4285f4" stroke="#fff" strokeWidth="2" />
        </svg>
        <Badge t="U" className="-right-[9px] -top-[9px]" />
      </TaskIcon>
      <TaskIcon dot>
        <svg width="36" height="36" viewBox="0 0 36 36">
          <path d="M18 0A18 18 0 0 1 18 36C14 36 11 35 8 33L1 36 3 28C1 25 0 22 0 18A18 18 0 0 1 18 0Z" fill="#25d366" />
          <path d="M18 4A14 14 0 1 1 18 32C15 32 12 31 9 29L5 30 6 26C4 24 4 21 4 18A14 14 0 0 1 18 4Z" fill="#fff" />
          <path d="M12 11Q15 9 16 14L14 16Q17 21 22 23L24 21Q28 22 27 25 24 28 18 25 11 21 10 15 10 12 12 11Z" fill="#25d366" />
        </svg>
        <Badge t="5" className="-right-[8px] -top-[8px]" />
      </TaskIcon>
      <TaskIcon dot>
        <div className="w-[32px] h-[36px] rounded-[3px] bg-[#b30b00] flex items-center justify-center">
          <Ic w={24} h={24} s="#fff" sw={1.6}><path d="M2 21Q7 16 10 8 11 3 12 3 14 4 12 10 15 16 22 16 19 18 12 16 7 17 4 21Z" /></Ic>
        </div>
      </TaskIcon>
      <TaskIcon active>
        <svg width="36" height="40" viewBox="0 0 36 40">
          <rect x="2" y="2" width="18" height="18" fill="#e8e6e8" />
          <path d="M2 2H18M2 2V18" stroke="#d83b01" strokeWidth="4" strokeDasharray="4 2" />
          <path d="M18 6V28M26 6 18 28" stroke="#8a8886" strokeWidth="3" />
          <circle cx="28" cy="22" r="4" stroke="#1a9ad6" strokeWidth="2.4" fill="none" />
          <circle cx="17" cy="35" r="4" stroke="#1a9ad6" strokeWidth="2.4" fill="none" />
        </svg>
      </TaskIcon>
      <div className="w-[38px] shrink-0" />
      <ChevronUp size={24} strokeWidth={1.8} className="text-[#252423] -ml-[5px]" />
      <Ic w={26} h={24} s="#252423" className="ml-[24px]"><path d="M6 20Q1 18 3 12 5 9 8 10 10 3 17 4 22 7 22 11 26 14 22 20Z" fill="#bdbdbd" /><path d="M4 2 23 23" strokeWidth="2" /></Ic>
      <svg width="24" height="34" viewBox="0 0 24 34" className="ml-[22px]">
        <path d="M6 0 10 5 6 10 2 5ZM18 0 22 5 18 10 14 5Z" fill="#111" />
        <rect y="12" width="24" height="22" rx="1" fill="#e81123" />
        <text x="12" y="29" fontSize="13" fill="#fff" textAnchor="middle" fontFamily="Noto Sans">11</text>
      </svg>
      <div className="ml-[15px] w-[60px] text-center text-[16.5px] leading-[24px] text-[#252423]">ENG<br />IN</div>
      <Ic w={26} h={26} s="#252423" sw={1.8} className="ml-[13px]"><path d="M1 9Q13 -1 25 9M5 14Q13 7 21 14M9 19Q13 15 17 19" /><circle cx="13" cy="23" r="1.5" fill="#252423" /></Ic>
      <Ic w={24} h={24} s="#252423" className="ml-[12px]"><path d="M2 8H6L12 2V22L6 16H2Z" /><path d="M15 7Q18 12 15 17M18 4Q22 12 18 20" /></Ic>
      <Ic w={26} h={18} s="#252423" sw={2} className="ml-[12px]"><rect x="1" y="1" width="21" height="16" rx="3" /><rect x="4" y="4" width="12" height="10" fill="#252423" /><path d="M24 6V12" /></Ic>
      <div className="w-[118px] text-right text-[16.5px] leading-[24px] text-[#252423] shrink-0">05:49<br />17-10-2023</div>
      <div className="ml-[17px] w-[24px] h-[26px] rounded-full bg-[#2b7f8f] text-white text-[14px] flex items-center justify-center">2</div>
    </div>
  );
}

export default function App() {
  return (
    <div className="w-[1920px] h-[1080px] flex flex-col overflow-hidden bg-[#f3f2f1]" style={FONT}>
      <TitleBar />
      <Ribbon />
      <div className="h-[732px] flex shrink-0 relative">
        <Rail />
        <div className="flex h-[680px] shrink-0">
          <Canvas />
          <FiltersPane />
        </div>
        <VizPane />
        <DataPane />
        <TabBar />
      </div>
      <StatusBar />
      <Taskbar />
    </div>
  );
}
